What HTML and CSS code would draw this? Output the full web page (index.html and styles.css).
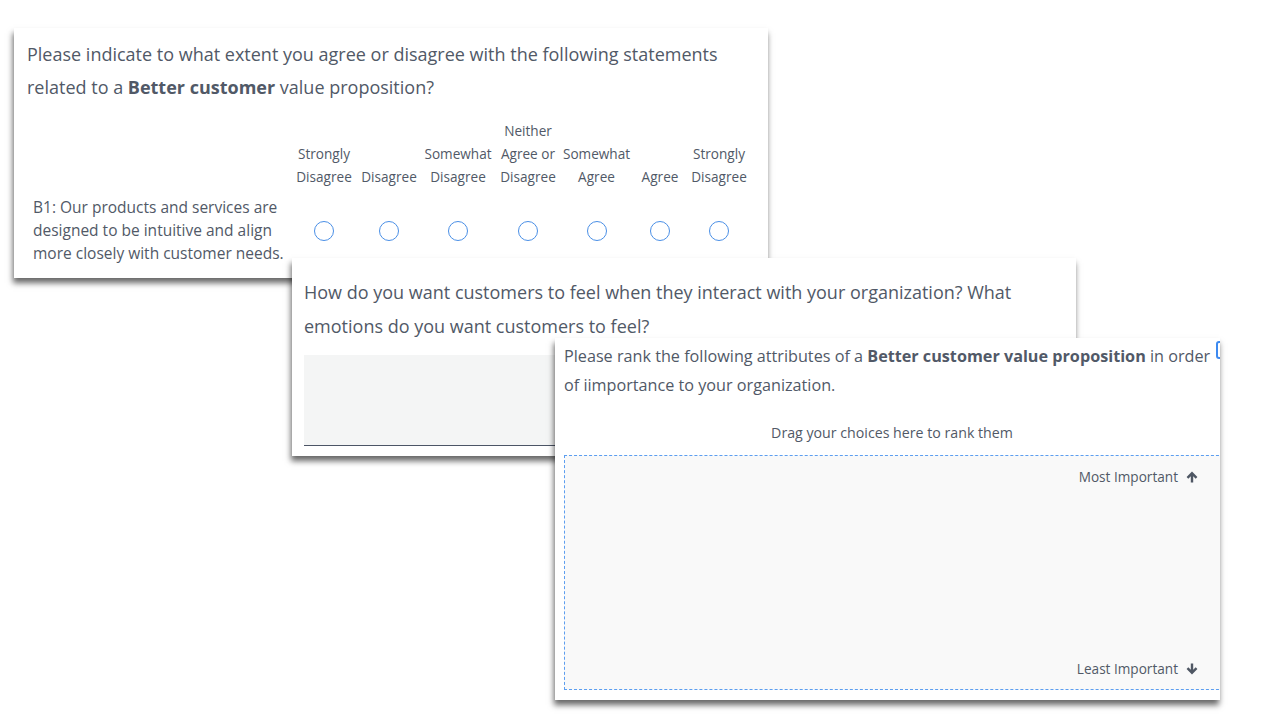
FILE: index.html
```html
<!DOCTYPE html>
<html lang="en">
<head>
  <meta charset="UTF-8">
  <title>Survey questions</title>
  <link rel="stylesheet" href="styles.css">
</head>
<body>
  <div class="canvas">

    <!-- matrix question -->
    <div class="card card-matrix">
      <div class="question">Please indicate to what extent you agree or disagree with the following statements related to a <strong>Better customer</strong> value proposition?</div>
      <div class="matrix">
        <div class="head-cell"></div>
        <div class="head-cell">Strongly Disagree</div>
        <div class="head-cell">Disagree</div>
        <div class="head-cell">Somewhat Disagree</div>
        <div class="head-cell">Neither Agree or Disagree</div>
        <div class="head-cell">Somewhat Agree</div>
        <div class="head-cell">Agree</div>
        <div class="head-cell">Strongly Disagree</div>

        <div class="statement">B1: Our products and services are designed to be intuitive and align more closely with customer needs.</div>
        <div class="choice"><span class="radio"></span></div>
        <div class="choice"><span class="radio"></span></div>
        <div class="choice"><span class="radio"></span></div>
        <div class="choice"><span class="radio"></span></div>
        <div class="choice"><span class="radio"></span></div>
        <div class="choice"><span class="radio"></span></div>
        <div class="choice"><span class="radio"></span></div>

        <div class="statement">B2: Our processes make it simple for customers to do business with us.</div>
        <div class="choice"><span class="radio"></span></div>
        <div class="choice"><span class="radio"></span></div>
        <div class="choice"><span class="radio"></span></div>
        <div class="choice"><span class="radio"></span></div>
        <div class="choice"><span class="radio"></span></div>
        <div class="choice"><span class="radio"></span></div>
        <div class="choice"><span class="radio"></span></div>
      </div>
    </div>

    <!-- open text question -->
    <div class="card card-text">
      <div class="question">How do you want customers to feel when they interact with your organization? What emotions do you want customers to feel?</div>
      <div class="text-entry"></div>
    </div>

    <!-- rank order question -->
    <div class="card card-rank">
      <span class="focus-mark"></span>
      <div class="question small">Please rank the following attributes of a <strong>Better customer value proposition</strong> in order of iimportance to your organization.</div>
      <div class="drop-hint">Drag your choices here to rank them</div>
      <div class="drop-zone">
        <div class="rank-label">Most Important
          <svg class="arrow" viewBox="0 0 12 12"><path d="M6 0.6 L11.4 6 L9.7 7.7 L7.2 5.2 L7.2 11.4 L4.8 11.4 L4.8 5.2 L2.3 7.7 L0.6 6 Z"/></svg>
        </div>
        <div class="rank-label">Least Important
          <svg class="arrow" viewBox="0 0 12 12"><path d="M6 11.4 L11.4 6 L9.7 4.3 L7.2 6.8 L7.2 0.6 L4.8 0.6 L4.8 6.8 L2.3 4.3 L0.6 6 Z"/></svg>
        </div>
      </div>
    </div>

  </div>
</body>
</html>
```

FILE: styles.css
```css
body {
  margin: 0;
  background-color: white;
  font-family: 'Open Sans', 'Noto Sans', sans-serif;
  color: #515967;
}
.canvas {
  position: relative;
  width: 1279px;
  height: 722px;
  overflow: hidden;
}
.card {
  position: absolute;
  background-color: white;
  overflow: hidden;
  box-shadow: -1px 5px 6px rgba(0, 0, 0, 0.6);
}
.card-matrix {
  left: 14px;
  top: 28px;
  width: 754px;
  height: 250px;
  padding: 10px 0 0 13px;
  box-sizing: border-box;
}
.card-text {
  left: 292px;
  top: 258px;
  width: 784px;
  height: 198px;
  padding: 17px 12px 0 12px;
  box-sizing: border-box;
}
.card-rank {
  left: 555px;
  top: 338px;
  width: 665px;
  height: 362px;
  padding: 4px 0 0 9px;
  box-sizing: border-box;
}
.question {
  font-size: 18px;
  line-height: 33px;
}
.card-text .question {
  line-height: 34px;
  width: 740px;
}
.question.small {
  font-size: 16.2px;
  line-height: 29px;
  width: 662px;
}
.question strong {
  font-weight: 700;
}
.matrix {
  display: grid;
  grid-template-columns: 260px 62px 68px 70px 70px 67px 60px 58px;
  margin: 15px 0 0 6px;
}
.head-cell {
  display: flex;
  align-items: flex-end;
  justify-content: center;
  text-align: center;
  font-size: 13.6px;
  line-height: 23px;
  padding-bottom: 8px;
}
.statement {
  font-size: 15.5px;
  line-height: 23px;
  padding-right: 4px;
  margin-bottom: 12px;
}
.choice {
  display: flex;
  align-items: center;
  justify-content: center;
  margin-bottom: 12px;
}
.radio {
  width: 18px;
  height: 18px;
  border: 1.5px solid #4a8fe6;
  border-radius: 50%;
}
.text-entry {
  margin-top: 12px;
  height: 90px;
  background-color: #f4f5f5;
  border-bottom: 1.5px solid #4c5566;
}
.focus-mark {
  position: absolute;
  right: -8px;
  top: 3px;
  width: 8px;
  height: 14px;
  border: 2px solid #3d8af0;
  border-radius: 3px;
}
.drop-hint {
  text-align: center;
  font-size: 14.2px;
  line-height: 20px;
  margin-top: 23px;
}
.drop-zone {
  margin-top: 12px;
  width: 670px;
  height: 235px;
  box-sizing: border-box;
  background-color: #f9f9f9;
  border: 1.5px dashed #5c9ef0;
  display: flex;
  flex-direction: column;
  justify-content: space-between;
  padding: 11px 35px 10px 0;
}
.rank-label {
  display: flex;
  align-items: center;
  justify-content: flex-end;
  gap: 8px;
  font-size: 13.6px;
  line-height: 20px;
}
.arrow {
  width: 12px;
  height: 12px;
  fill: #4f5764;
}
```
